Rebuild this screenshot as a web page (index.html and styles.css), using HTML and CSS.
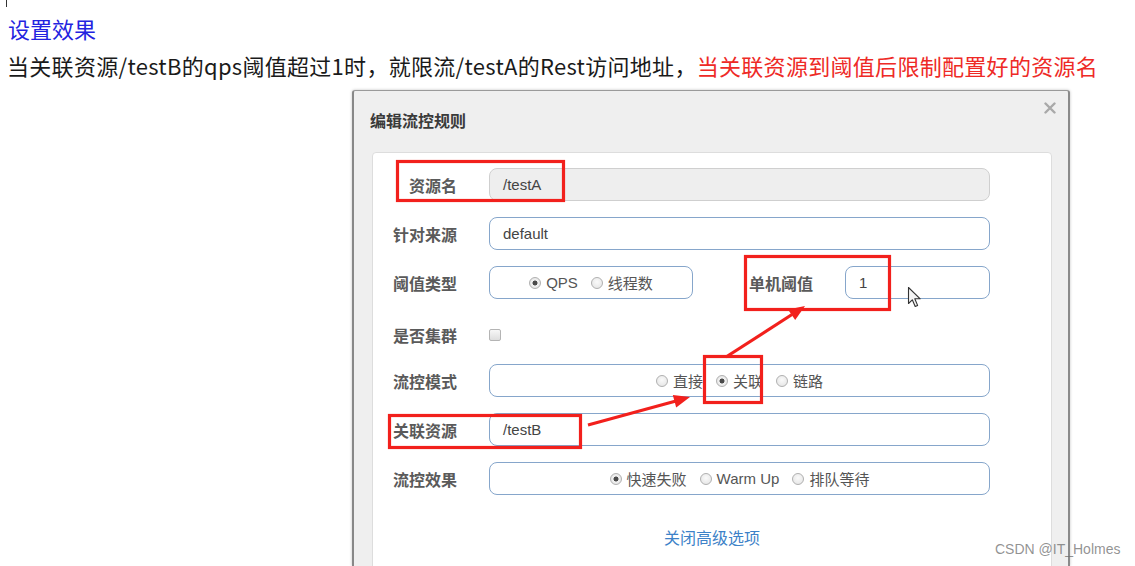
FILE: index.html
```html
<!DOCTYPE html>
<html lang="zh-CN">
<head>
<meta charset="utf-8">
<title>设置效果</title>
<link rel="stylesheet" href="styles.css">
</head>
<body>
<div class="page">
  <div class="caret"></div>
  <h2 class="title">设置效果</h2>
  <p class="desc">当关联资源/testB的qps阈值超过1时，就限流/testA的Rest访问地址，<span class="red">当关联资源到阈值后限制配置好的资源名</span></p>

  <div class="dialog">
    <div class="dlg-head">
      <span class="dlg-title">编辑流控规则</span>
      <svg class="close" width="12" height="12" viewBox="0 0 12 12"><path d="M1.5 1.5L10.5 10.5M10.5 1.5L1.5 10.5" stroke="#a9a9a9" stroke-width="2.4" stroke-linecap="round"/></svg>
    </div>
    <div class="panel">
      <div class="row">
        <span class="lbl">资源名</span>
        <div class="field wide disabled">/testA</div>
      </div>
      <div class="row">
        <span class="lbl">针对来源</span>
        <div class="field wide">default</div>
      </div>
      <div class="row">
        <span class="lbl">阈值类型</span>
        <div class="field radios short">
          <span class="opt"><i class="radio on"></i>QPS</span>
          <span class="opt"><i class="radio"></i>线程数</span>
        </div>
        <span class="lbl lbl2">单机阈值</span>
        <div class="field small">1</div>
      </div>
      <div class="row check-row">
        <span class="lbl">是否集群</span>
        <i class="checkbox"></i>
      </div>
      <div class="row">
        <span class="lbl">流控模式</span>
        <div class="field wide radios">
          <span class="opt"><i class="radio"></i>直接</span>
          <span class="opt"><i class="radio on"></i>关联</span>
          <span class="opt"><i class="radio"></i>链路</span>
        </div>
      </div>
      <div class="row">
        <span class="lbl">关联资源</span>
        <div class="field wide">/testB</div>
      </div>
      <div class="row">
        <span class="lbl">流控效果</span>
        <div class="field wide radios">
          <span class="opt"><i class="radio on"></i>快速失败</span>
          <span class="opt"><i class="radio"></i>Warm Up</span>
          <span class="opt"><i class="radio"></i>排队等待</span>
        </div>
      </div>
      <div class="more">关闭高级选项</div>
    </div>
  </div>

  <svg class="annot" width="1135" height="566" viewBox="0 0 1135 566">
    <g fill="none" stroke="#f2201c" stroke-width="3.2">
      <rect x="397.5" y="161.5" width="166" height="39"/>
      <rect x="745.5" y="256.5" width="144" height="53"/>
      <rect x="704.5" y="356.5" width="57" height="46"/>
      <rect x="389.5" y="415.5" width="191" height="32"/>
      <line x1="588" y1="425" x2="676" y2="401"/>
      <line x1="726" y1="357" x2="792" y2="314.5"/>
    </g>
    <g fill="#f2201c">
      <polygon points="690,397 676.2,407.5 672.8,395"/>
      <polygon points="805,306 795.2,320 788,309.4"/>
    </g>
    <path d="M908.5 287.5 L908.5 303.5 L912.3 299.8 L915.2 306.5 L917.6 305.4 L914.8 298.8 L920.2 298.8 Z" fill="#f4f4f4" stroke="#333" stroke-width="1.1" stroke-linejoin="round"/>
  </svg>

  <div class="watermark">CSDN @IT_Holmes</div>
</div>
</body>
</html>
```

FILE: styles.css
```css
html, body {
  margin: 0;
  padding: 0;
  background: #ffffff;
}
body {
  height: 566px;
  overflow: hidden;
  font-family: "Noto Sans CJK SC", "Noto Sans", sans-serif;
}
.page {
  position: relative;
  width: 1135px;
  height: 566px;
  overflow: hidden;
}
.caret {
  width: 1px;
  height: 7px;
  margin-left: 6px;
  background: #333;
}
.title {
  margin: 7px 0 0 8px;
  font-size: 22px;
  line-height: 28px;
  font-weight: 400;
  color: #2323e0;
}
.desc {
  margin: 9px 0 0 7px;
  font-size: 22px;
  line-height: 28px;
  letter-spacing: 0.3px;
  color: #1a1a1a;
  white-space: nowrap;
}
.desc .red {
  color: #ee2a26;
}
.dialog {
  box-sizing: border-box;
  width: 718px;
  height: 476px;
  overflow: hidden;
  margin: 11px 0 0 352px;
  background: #efefef;
  border: 1px solid #9a9a9a;
  border-bottom: none;
  border-left: 2px solid #888;
  border-right: 2px solid #8a8a8a;
  border-radius: 3px 3px 0 0;
  box-shadow: 0 0 3px rgba(0, 0, 0, 0.25);
}
.dlg-head {
  display: flex;
  justify-content: space-between;
  align-items: flex-start;
  height: 61px;
  padding: 0 12px 0 16px;
}
.dlg-title {
  margin-top: 19px;
  font-size: 16px;
  line-height: 20px;
  font-weight: 700;
  color: #3a3a3a;
}
.close {
  margin-top: 11px;
}
.panel {
  margin: 0 16px 0 18px;
  height: 430px;
  box-sizing: border-box;
  padding: 15px 0 0 19px;
  background: #fff;
  border: 1px solid #ddd;
  border-radius: 4px;
}
.row {
  display: flex;
  align-items: center;
  height: 33px;
  margin-bottom: 16px;
}
.check-row {
  box-sizing: border-box;
  padding-top: 6px;
}
.lbl {
  flex: none;
  width: 65px;
  margin-right: 32px;
  text-align: right;
  white-space: nowrap;
  font-size: 16px;
  font-weight: 700;
  color: #5a5a5a;
}
.lbl2 {
  margin-left: 55px;
}
.field {
  flex: none;
  box-sizing: border-box;
  height: 33px;
  display: flex;
  align-items: center;
  padding: 0 13px;
  border: 1.5px solid #86a6cb;
  border-radius: 8px;
  background: #fff;
  font-family: "Liberation Sans", Arial, sans-serif;
  font-size: 15px;
  color: #444;
}
.wide {
  width: 501px;
}
.short {
  width: 204px;
}
.small {
  width: 145px;
}
.disabled {
  background: #eeeeee;
  border: 1px solid #cfcfcf;
}
.radios {
  justify-content: center;
  gap: 13px;
  padding: 0;
  font-family: "Liberation Sans", "Noto Sans CJK SC", sans-serif;
  color: #555;
}
.opt {
  display: flex;
  align-items: center;
  white-space: nowrap;
}
.radio {
  display: inline-block;
  box-sizing: border-box;
  width: 12px;
  height: 12px;
  margin-right: 5px;
  border: 1px solid #b0b0b0;
  border-radius: 50%;
  background: radial-gradient(circle at 50% 40%, #fafafa 0%, #e2e2e2 100%);
}
.radio.on {
  background: radial-gradient(circle, #4a4a4a 0, #4a4a4a 2.2px, #f2f2f2 2.8px, #dcdcdc 100%);
}
.checkbox {
  display: inline-block;
  box-sizing: border-box;
  width: 12px;
  height: 12px;
  border: 1px solid #b4b4b4;
  border-radius: 2px;
  background: linear-gradient(#f7f7f7, #dedede);
}
.more {
  margin-top: 31px;
  margin-left: -19px;
  text-align: center;
  font-size: 16px;
  line-height: 22px;
  color: #3d82c8;
}
.annot {
  position: absolute;
  left: 0;
  top: 0;
  pointer-events: none;
}
.watermark {
  position: absolute;
  left: 995px;
  top: 541px;
  font-family: "Liberation Sans", Arial, sans-serif;
  font-size: 14px;
  color: rgba(110, 110, 110, 0.75);
  white-space: nowrap;
}
```
